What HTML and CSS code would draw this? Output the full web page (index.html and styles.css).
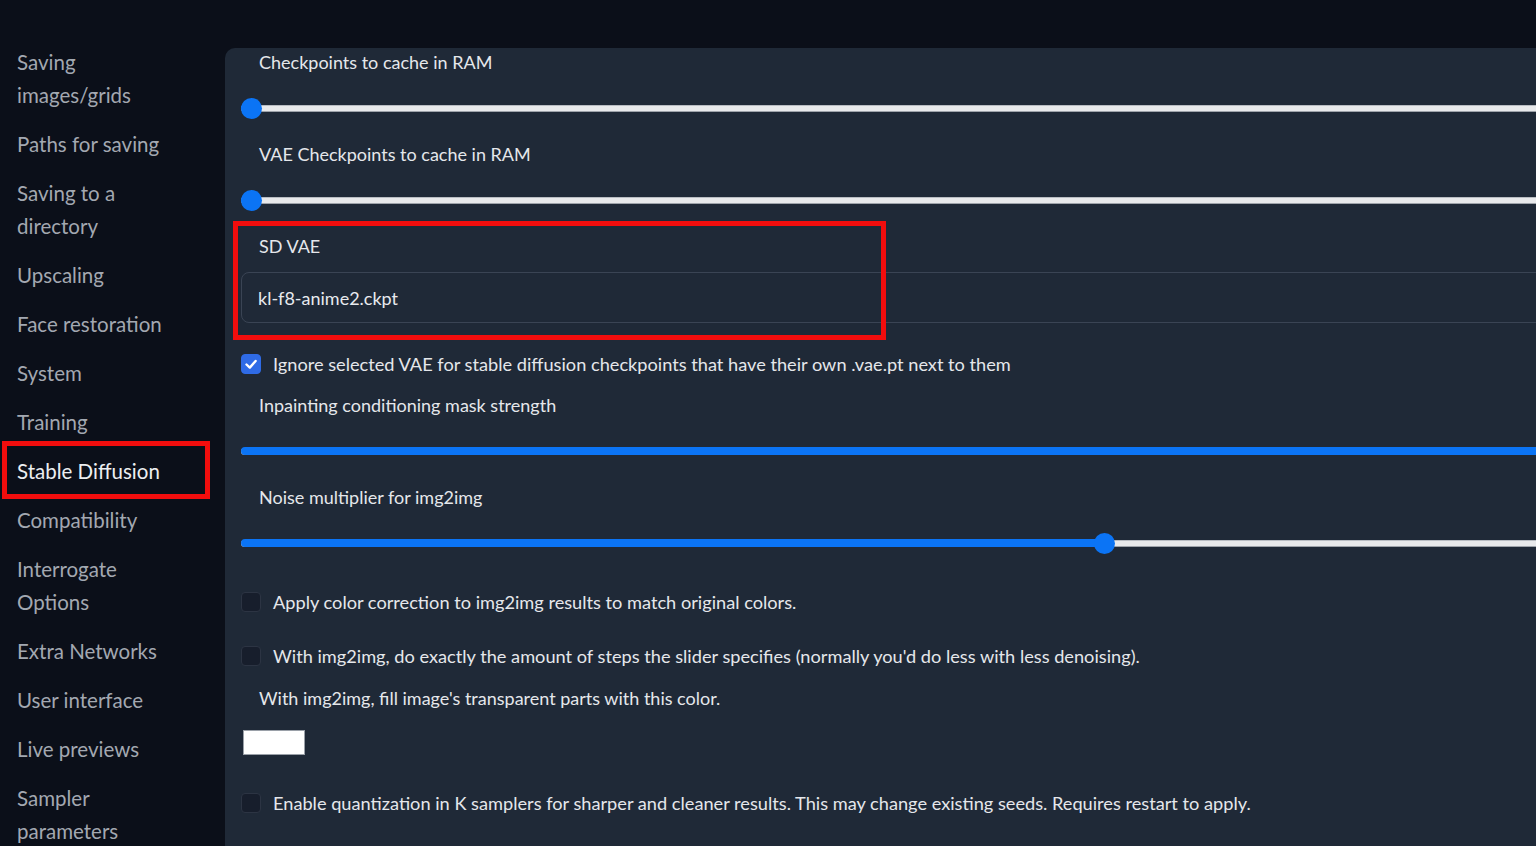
FILE: index.html
```html
<!DOCTYPE html>
<html lang="en">
<head>
<meta charset="utf-8">
<title>Settings</title>
<link rel="stylesheet" href="styles.css">
</head>
<body>
<div class="layout">
  <nav class="sidebar">
    <div class="nav-item">Saving<br>images/grids</div>
    <div class="nav-item">Paths for saving</div>
    <div class="nav-item">Saving to a<br>directory</div>
    <div class="nav-item">Upscaling</div>
    <div class="nav-item">Face restoration</div>
    <div class="nav-item">System</div>
    <div class="nav-item">Training</div>
    <div class="nav-item active">Stable Diffusion<span class="highlight nav-highlight"></span></div>
    <div class="nav-item">Compatibility</div>
    <div class="nav-item">Interrogate<br>Options</div>
    <div class="nav-item">Extra Networks</div>
    <div class="nav-item">User interface</div>
    <div class="nav-item">Live previews</div>
    <div class="nav-item">Sampler<br>parameters</div>
  </nav>
  <main class="panel">
    <div class="slider-block first">
      <div class="label">Checkpoints to cache in RAM</div>
      <div class="slider"><div class="track"></div><div class="fill" style="width:10px"></div><div class="thumb" style="left:0px"></div></div>
    </div>
    <div class="slider-block">
      <div class="label">VAE Checkpoints to cache in RAM</div>
      <div class="slider"><div class="track"></div><div class="fill" style="width:10px"></div><div class="thumb" style="left:0px"></div></div>
    </div>
    <div class="dropdown-block">
      <div class="label">SD VAE</div>
      <div class="dropdown">kl-f8-anime2.ckpt</div>
      <span class="highlight vae-highlight"></span>
    </div>
    <div class="check-row row-ignore">
      <span class="checkbox checked"><svg viewBox="0 0 20 20" width="20" height="20"><polyline points="5.5,10.5 8.8,13.6 14.6,7" fill="none" stroke="#fff" stroke-width="2.4" stroke-linecap="round" stroke-linejoin="round"/></svg></span>
      <span class="check-label">Ignore selected VAE for stable diffusion checkpoints that have their own .vae.pt next to them</span>
    </div>
    <div class="slider-block after-check">
      <div class="label">Inpainting conditioning mask strength</div>
      <div class="slider"><div class="track"></div><div class="fill full"></div></div>
    </div>
    <div class="slider-block">
      <div class="label">Noise multiplier for img2img</div>
      <div class="slider"><div class="track"></div><div class="fill" style="width:863px"></div><div class="thumb" style="left:853px"></div></div>
    </div>
    <div class="check-row row-color">
      <span class="checkbox"></span>
      <span class="check-label">Apply color correction to img2img results to match original colors.</span>
    </div>
    <div class="check-row row-steps">
      <span class="checkbox"></span>
      <span class="check-label">With img2img, do exactly the amount of steps the slider specifies (normally you'd do less with less denoising).</span>
    </div>
    <div class="label fill-label">With img2img, fill image's transparent parts with this color.</div>
    <div class="swatch"></div>
    <div class="check-row row-quant">
      <span class="checkbox"></span>
      <span class="check-label">Enable quantization in K samplers for sharper and cleaner results. This may change existing seeds. Requires restart to apply.</span>
    </div>
  </main>
</div>
</body>
</html>
```

FILE: styles.css
```css
html, body {
  margin: 0;
  padding: 0;
  background: #0b0f19;
  overflow: hidden;
  height: 846px;
}
body {
  font-family: Lato, "Noto Sans", sans-serif;
  color: #e5e7eb;
}
.layout {
  display: flex;
  height: 846px;
}
.sidebar {
  width: 225px;
  flex: none;
  padding: 46px 0 0 17px;
  box-sizing: border-box;
  display: flex;
  flex-direction: column;
  gap: 16px;
  font-size: 20.5px;
  line-height: 33px;
  color: #a3a8b1;
}
.nav-item {
  position: relative;
  white-space: nowrap;
}
.nav-item.active {
  color: #eceef1;
}
.highlight {
  position: absolute;
  border: 5px solid #f20d0d;
  box-sizing: border-box;
  pointer-events: none;
}
.nav-highlight {
  left: -15px;
  top: -14px;
  width: 208px;
  height: 58px;
}
.panel {
  flex: 1;
  margin-top: 48px;
  background: #1f2937;
  border-radius: 10px 0 0 0;
  padding: 2px 0 0 16px;
  overflow: hidden;
  display: flex;
  flex-direction: column;
  align-items: stretch;
  font-size: 18px;
  line-height: 24px;
}
.label {
  padding-left: 18px;
  white-space: nowrap;
}
.slider-block {
  display: flex;
  flex-direction: column;
  gap: 24px;
  margin-bottom: 24px;
  margin-right: -40px;
}
.slider-block.after-check {
  margin-top: 17px;
}
.slider {
  position: relative;
  height: 20px;
}
.track {
  position: absolute;
  left: 0;
  right: 0;
  top: 7px;
  height: 7px;
  background: #e8e9eb;
  border-top: 1px solid #b8bcc2;
  border-bottom: 1px solid #9ea3aa;
  box-sizing: border-box;
  border-radius: 4px;
}
.fill {
  position: absolute;
  left: 0;
  top: 6px;
  height: 8px;
  background: #0b74f5;
  border-radius: 4px;
}
.fill.full {
  right: 0;
}
.thumb {
  position: absolute;
  top: -0.5px;
  width: 21px;
  height: 21px;
  border-radius: 50%;
  background: #0b74f5;
}
.dropdown-block {
  position: relative;
  display: flex;
  flex-direction: column;
  margin-right: -40px;
}
.dropdown {
  margin-top: 14px;
  height: 51px;
  box-sizing: border-box;
  border: 1px solid #3a4454;
  border-radius: 8px;
  padding: 0 16px;
  display: flex;
  align-items: center;
  font-size: 18px;
  color: #e8eaee;
}
.vae-highlight {
  left: -8px;
  top: -13px;
  width: 653px;
  height: 119px;
}
.check-row {
  display: flex;
  align-items: center;
  gap: 12px;
  white-space: nowrap;
}
.row-ignore { margin-top: 29px; }
.row-color { margin-top: 13px; }
.row-steps { margin-top: 30px; }
.row-quant { margin-top: 36px; }
.checkbox {
  width: 20px;
  height: 20px;
  flex: none;
  box-sizing: border-box;
  border-radius: 4px;
  background: #171e2c;
  border: 1px solid #2c3443;
  display: flex;
}
.checkbox.checked {
  background: #2f6be6;
  border-color: #2f6be6;
}
.checkbox svg {
  margin: -1px;
}
.check-label {
  font-size: 18.2px;
}
.fill-label {
  margin-top: 18px;
}
.swatch {
  margin: 20px 0 0 2px;
  width: 62px;
  height: 25px;
  box-sizing: border-box;
  background: #ffffff;
  border: 1px solid #9aa0a8;
}
```
